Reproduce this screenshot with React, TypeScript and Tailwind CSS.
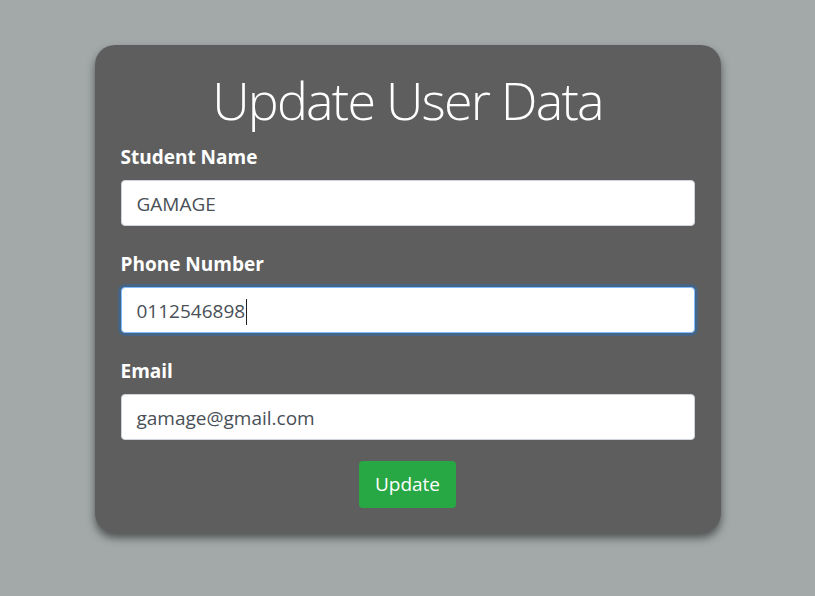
import React from "react";

interface FieldProps {
    label: string;
    value: string;
    focused?: boolean;
}

function Field({ label, value, focused }: FieldProps) {
    return (
        <div className="mb-[23px]">
            <div className="text-[19px] leading-[30px] font-bold text-white mb-[8px]">{label}</div>
            <div
                className={
                    focused
                        ? "h-[46px] rounded-[4px] bg-white border border-[#80bdff] ring-[3px] ring-[rgba(0,123,255,0.25)] px-[15px] pt-[3px] flex items-center text-[19px] text-[#495057]"
                        : "h-[46px] rounded-[4px] bg-white border border-[#ced4da] px-[15px] pt-[3px] flex items-center text-[19px] text-[#495057]"
                }
            >
                <span>{value}</span>
                {focused && <span className="w-px h-[26px] bg-[#222] ml-px" />}
            </div>
        </div>
    );
}

export default function App() {
    return (
        <div
            className="min-h-screen bg-[#a3a8a8] pt-[45px]"
            style={{ fontFamily: '"Open Sans", "Noto Sans", sans-serif' }}
        >
            <div className="mx-auto w-[626px] rounded-[20px] bg-[#5e5e5e] px-[26px] pt-[24px] pb-[25px] shadow-[0_5px_8px_rgba(0,0,0,0.5)]">
                <h1 className="text-center text-[52px] leading-[62px] font-light tracking-[-1.8px] text-white mb-[11px]">
                    Update User Data
                </h1>
                <Field label="Student Name" value="GAMAGE" />
                <Field label="Phone Number" value="0112546898" focused />
                <div className="-mb-[2px]">
                    <Field label="Email" value="gamage@gmail.com" />
                </div>
                <div className="flex justify-center">
                    <button className="h-[47px] px-[16px] rounded-[4px] bg-[#28a745] text-white text-[19px]">
                        Update
                    </button>
                </div>
            </div>
        </div>
    );
}
